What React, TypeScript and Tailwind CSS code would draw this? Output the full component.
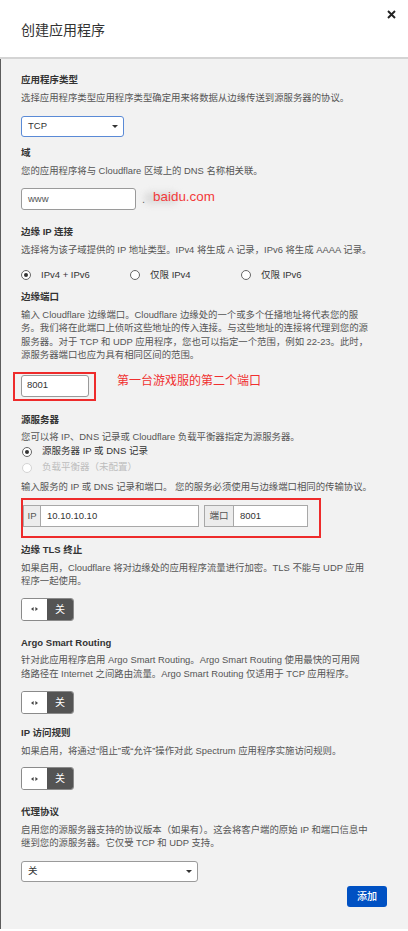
import React from "react";

const FONT = "[font-family:'Liberation_Sans','Noto_Sans_CJK_SC',sans-serif]";

function Heading({ children, className = "" }: { children: React.ReactNode; className?: string }) {
  return (
    <div className={`text-[9.5px] leading-[13.5px] font-bold text-[#333] ${className}`}>{children}</div>
  );
}

function Desc({ lines, className = "mt-[4px]" }: { lines: string[]; className?: string }) {
  return (
    <div className={`text-[9.4px] leading-[13.5px] text-[#555] ${className}`}>
      {lines.map((l) => (
        <div key={l} className="whitespace-nowrap">
          {l}
        </div>
      ))}
    </div>
  );
}

function Caret() {
  return (
    <svg width="6" height="3" viewBox="0 0 6 3">
      <polygon points="0,0 6,0 3,3" fill="#333" />
    </svg>
  );
}

function Select({ value, width, focused }: { value: string; width: string; focused?: boolean }) {
  return (
    <div
      className={`flex h-[21px] items-center justify-between rounded-[3px] border bg-white pl-[6px] pr-[5px] text-[9.5px] text-[#333] ${width} ${
        focused ? "border-[#5a8ad6]" : "border-[#9a9a9a]"
      }`}
    >
      <span>{value}</span>
      <Caret />
    </div>
  );
}

function Radio({ checked, disabled, label }: { checked?: boolean; disabled?: boolean; label: string }) {
  return (
    <div className="flex h-[14px] items-center">
      <span
        className={`flex h-[10px] w-[10px] items-center justify-center rounded-full border bg-white ${
          disabled ? "border-[#d4d4d4]" : "border-[#666]"
        }`}
      >
        {checked && <span className="h-[4px] w-[4px] rounded-full bg-[#333]" />}
      </span>
      <span className={`ml-[10px] text-[9.5px] ${disabled ? "text-[#bdbdbd]" : "text-[#333]"}`}>{label}</span>
    </div>
  );
}

function Toggle() {
  return (
    <div className="flex h-[23px] w-[53px] overflow-hidden rounded-[3px] border border-[#8a8a8a]">
      <div className="flex w-[25px] items-center justify-center bg-white">
        <svg width="7" height="4" viewBox="0 0 7 4">
          <polygon points="0,2 2.6,0 2.6,4" fill="#444" />
          <polygon points="7,2 4.4,0 4.4,4" fill="#444" />
        </svg>
      </div>
      <div className="flex flex-1 items-center justify-center bg-[#545454] text-[10px] text-white">关</div>
    </div>
  );
}

function InputGroup({ prefix, value, prefixW, width }: { prefix: string; value: string; prefixW: string; width: string }) {
  return (
    <div className={`flex h-[22px] border border-[#a8a8a8] bg-white text-[9.5px] ${width}`}>
      <div className={`flex items-center justify-center border-r border-[#a8a8a8] bg-[#ececec] text-[#555] ${prefixW}`}>
        {prefix}
      </div>
      <div className="flex flex-1 items-center pl-[6px] text-[#333]">{value}</div>
    </div>
  );
}

export default function App() {
  return (
    <div className={`w-[408px] bg-[#f2f2f2] ${FONT}`}>
      <div className="relative flex h-[59px] items-center border-b-2 border-[#d4d4d4] bg-white pl-[21px] pt-[3px]">
        <h1 className="text-[14px] text-[#333]">创建应用程序</h1>
        <button className="absolute right-[12px] top-[10px]" aria-label="close">
          <svg width="9" height="9" viewBox="0 0 9 9">
            <path d="M1 1 L8 8 M8 1 L1 8" stroke="#222" strokeWidth="1.9" />
          </svg>
        </button>
      </div>

      <div className="min-h-[870px] border-l border-[#5c5c5c] pl-[20px] pr-[21px] pb-[22px]">
        <Heading className="pt-[14px]">应用程序类型</Heading>
        <Desc lines={["选择应用程序类型应用程序类型确定用来将数据从边缘传送到源服务器的协议。"]} />
        <div className="mt-[12px]">
          <Select value="TCP" width="w-[103px]" focused />
        </div>

        <Heading className="mt-[9px]">域</Heading>
        <Desc lines={["您的应用程序将与 Cloudflare 区域上的 DNS 名称相关联。"]} />
        <div className="mt-[11px] flex h-[22px] items-center">
          <div className="flex h-[22px] w-[115px] items-center rounded-[3px] border border-[#9a9a9a] bg-white pl-[6px] text-[9.5px] text-[#555]">
            www
          </div>
          <div className="relative ml-[6px] flex items-center">
            <span className="absolute left-[2px] top-[2px] h-[12px] w-[34px] rounded-full bg-[#dcdcdc] blur-[3px]" />
            <span className="relative text-[11px] text-[#666]">.</span>
            <span className="relative ml-[8px] -mt-[3px] text-[13.4px] text-[#f23a3a]">baidu.com</span>
          </div>
        </div>

        <Heading className="mt-[15px]">边缘 IP 连接</Heading>
        <Desc lines={["选择将为该子域提供的 IP 地址类型。IPv4 将生成 A 记录，IPv6 将生成 AAAA 记录。"]} />
        <div className="mt-[12px] flex">
          <div className="w-[109px]">
            <Radio checked label="IPv4 + IPv6" />
          </div>
          <div className="w-[111px]">
            <Radio label="仅限 IPv4" />
          </div>
          <Radio label="仅限 IPv6" />
        </div>

        <Heading className="mt-[8px]">边缘端口</Heading>
        <Desc
          lines={[
            "输入 Cloudflare 边缘端口。Cloudflare 边缘处的一个或多个任播地址将代表您的服",
            "务。我们将在此端口上侦听这些地址的传入连接。与这些地址的连接将代理到您的源",
            "服务器。对于 TCP 和 UDP 应用程序，您也可以指定一个范围，例如 22-23。此时，",
            "源服务器端口也应为具有相同区间的范围。",
          ]}
        />
        <div className="mt-[10px] flex items-start">
          <div className="ml-[-8px] border-2 border-[#ee2b2b] pb-[2px] pl-[6px] pr-[5px] pt-[1px]">
            <div className="flex h-[22px] w-[68px] items-center rounded-[3px] border border-[#9a9a9a] bg-white pl-[5px] text-[9.5px] text-[#333]">
              8001
            </div>
          </div>
          <div className="ml-[21px] mt-[1px] text-[12px] leading-[16px] text-[#f03030]">第一台游戏服的第二个端口</div>
        </div>

        <Heading className="mt-[12px]">源服务器</Heading>
        <Desc lines={["您可以将 IP、DNS 记录或 Cloudflare 负载平衡器指定为源服务器。"]} />
        <div className="mt-[1px] flex flex-col gap-[2px] pl-[1px]">
          <Radio checked label="源服务器 IP 或 DNS 记录" />
          <Radio disabled label="负载平衡器（未配置）" />
        </div>
        <Desc className="mt-[5px]" lines={["输入服务的 IP 或 DNS 记录和端口。 您的服务必须使用与边缘端口相同的传输协议。"]} />
        <div className="mt-[5px] flex w-[300px] gap-[5px] border-2 border-[#ee2b2b] pb-[9px] pr-[11px] pt-[5px]">
          <InputGroup prefix="IP" value="10.10.10.10" prefixW="w-[17px]" width="w-[176px]" />
          <InputGroup prefix="端口" value="8001" prefixW="w-[29px]" width="w-[104px]" />
        </div>

        <Heading className="mt-[5px]">边缘 TLS 终止</Heading>
        <Desc
          lines={[
            "如果启用，Cloudflare 将对边缘处的应用程序流量进行加密。TLS 不能与 UDP 应用",
            "程序一起使用。",
          ]}
        />
        <div className="mt-[10px]">
          <Toggle />
        </div>

        <Heading className="mt-[15px]">Argo Smart Routing</Heading>
        <Desc
          lines={[
            "针对此应用程序启用 Argo Smart Routing。Argo Smart Routing 使用最快的可用网",
            "络路径在 Internet 之间路由流量。Argo Smart Routing 仅适用于 TCP 应用程序。",
          ]}
        />
        <div className="mt-[11px]">
          <Toggle />
        </div>

        <Heading className="mt-[12px]">IP 访问规则</Heading>
        <Desc lines={["如果启用，将通过“阻止”或“允许”操作对此 Spectrum 应用程序实施访问规则。"]} />
        <div className="mt-[10px]">
          <Toggle />
        </div>

        <Heading className="mt-[15px]">代理协议</Heading>
        <Desc
          lines={[
            "启用您的源服务器支持的协议版本（如果有）。这会将客户端的原始 IP 和端口信息中",
            "继到您的源服务器。它仅受 TCP 和 UDP 支持。",
          ]}
        />
        <div className="mt-[11px]">
          <Select value="关" width="w-[177px]" />
        </div>

        <div className="mt-[4px] flex justify-end">
          <button className="flex h-[21px] w-[40px] items-center justify-center rounded-[3px] bg-[#0051c3] text-[10px] font-medium text-white">
            添加
          </button>
        </div>
      </div>
    </div>
  );
}
